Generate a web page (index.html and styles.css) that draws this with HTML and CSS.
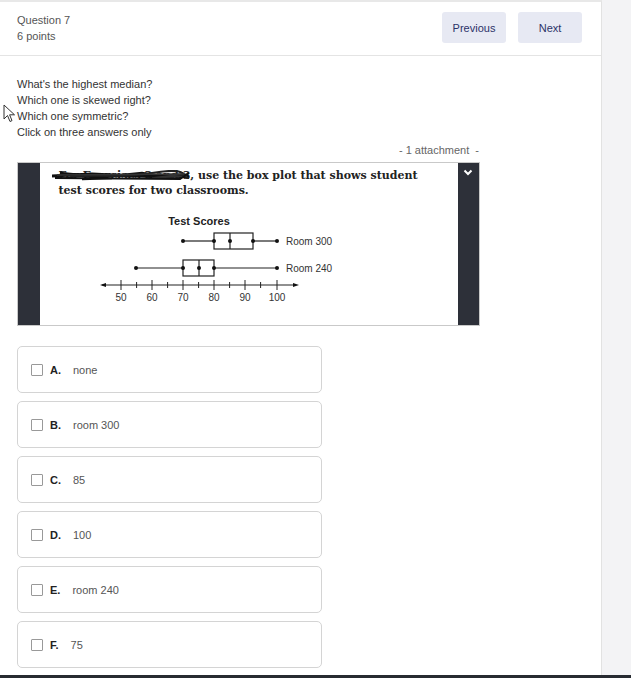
FILE: index.html
```html
<!DOCTYPE html>
<html lang="en">
<head>
  <meta charset="UTF-8">
  <title>Question 7</title>
  <link rel="stylesheet" href="styles.css">
</head>
<body>
  <div class="screen">
    <div class="page">
      <div class="main">
        <div class="q-header">
          <div class="q-meta">
            <div>Question 7</div>
            <div>6 points</div>
          </div>
          <div class="q-nav">
            <button class="nav-btn">Previous</button>
            <button class="nav-btn">Next</button>
          </div>
        </div>

        <div class="q-body">
          <div class="prompt">
            <p>What's the highest median?</p>
            <p>Which one is skewed right?</p>
            <p>Which one symmetric?</p>
            <p>Click on three answers only</p>
          </div>

          <div class="attach-count">- 1 attachment &nbsp;-</div>

          <div class="attachment">
            <div class="attach-bar"></div>
            <div class="attach-img">
              <div class="img-title">
                <span class="scribbled">For Exercises 2 and 3</span>, use the box plot that shows student<br>
                test scores for two classrooms.
                <svg class="scribble" width="140" height="12" viewBox="0 0 140 12">
                  <path d="M0 6 L40 4 L80 6 L136 5" stroke="#111" stroke-width="3" fill="none"/>
                  <path d="M8 3 L60 8 L30 9 L90 3 L120 8 L70 5 L137 7" stroke="#111" stroke-width="2.5" fill="none"/>
                  <path d="M14 8 C40 2 60 10 100 3 S130 9 137 8" stroke="#222" stroke-width="2" fill="none"/>
                  <path d="M5 5 L132 4 L100 8 L135 6" stroke="#333" stroke-width="1.5" fill="none"/>
                  <path d="M3 8 L128 9 L137 3" stroke="#111" stroke-width="2" fill="none"/>
                </svg>
              </div>
              <svg class="chart" width="418" height="126" viewBox="0 0 418 126">
                <text x="159" y="27" text-anchor="middle" class="chart-title">Test Scores</text>

                <g stroke="#222" stroke-width="1.2" fill="none">
                  <line x1="143" y1="43" x2="174" y2="43"/>
                  <line x1="213" y1="43" x2="237" y2="43"/>
                  <rect x="174" y="35" width="39" height="16"/>
                  <line x1="190" y1="35" x2="190" y2="51"/>

                  <line x1="96" y1="70" x2="143" y2="70"/>
                  <line x1="174" y1="70" x2="237" y2="70"/>
                  <rect x="143" y="62" width="31" height="16"/>
                  <line x1="159" y1="62" x2="159" y2="78"/>

                  <line x1="62" y1="87" x2="256" y2="87"/>
                </g>
                <g fill="#111">
                  <circle cx="143" cy="43" r="2"/>
                  <circle cx="174" cy="43" r="2"/>
                  <circle cx="190" cy="43" r="2"/>
                  <circle cx="213" cy="43" r="2"/>
                  <circle cx="237" cy="43" r="2"/>
                  <circle cx="96" cy="70" r="2"/>
                  <circle cx="143" cy="70" r="2"/>
                  <circle cx="159" cy="70" r="2"/>
                  <circle cx="174" cy="70" r="2"/>
                  <circle cx="237" cy="70" r="2"/>
                  <path d="M60 87 L66 85 L66 89 Z"/>
                  <path d="M259 87 L253 85 L253 89 Z"/>
                </g>
                <g stroke="#222" stroke-width="1">
                  <line x1="81" y1="82" x2="81" y2="92"/>
                  <line x1="96.6" y1="84" x2="96.6" y2="90"/>
                  <line x1="112" y1="82" x2="112" y2="92"/>
                  <line x1="127.6" y1="84" x2="127.6" y2="90"/>
                  <line x1="143" y1="82" x2="143" y2="92"/>
                  <line x1="158.6" y1="84" x2="158.6" y2="90"/>
                  <line x1="174" y1="82" x2="174" y2="92"/>
                  <line x1="189.6" y1="84" x2="189.6" y2="90"/>
                  <line x1="205" y1="82" x2="205" y2="92"/>
                  <line x1="220.6" y1="84" x2="220.6" y2="90"/>
                  <line x1="237" y1="82" x2="237" y2="92"/>
                </g>
                <g class="chart-label" text-anchor="middle">
                  <text x="81" y="103">50</text>
                  <text x="112" y="103">60</text>
                  <text x="143" y="103">70</text>
                  <text x="174" y="103">80</text>
                  <text x="205" y="103">90</text>
                  <text x="237" y="103">100</text>
                </g>
                <text x="246" y="47" class="chart-label">Room 300</text>
                <text x="246" y="74" class="chart-label">Room 240</text>
              </svg>
            </div>
            <div class="attach-bar">
              <svg class="chevron" width="10" height="7" viewBox="0 0 10 7">
                <path d="M1.5 1.5 L5 5 L8.5 1.5" stroke="#fff" stroke-width="2" fill="none"/>
              </svg>
            </div>
          </div>

          <div class="options">
            <label class="option"><span class="box"></span><b>A.</b><span class="opt-text">none</span></label>
            <label class="option"><span class="box"></span><b>B.</b><span class="opt-text">room 300</span></label>
            <label class="option"><span class="box"></span><b>C.</b><span class="opt-text">85</span></label>
            <label class="option"><span class="box"></span><b>D.</b><span class="opt-text">100</span></label>
            <label class="option"><span class="box"></span><b>E.</b><span class="opt-text">room 240</span></label>
            <label class="option"><span class="box"></span><b>F.</b><span class="opt-text">75</span></label>
          </div>
        </div>
      </div>
      <div class="side"></div>
    </div>
    <div class="bottom-bar"></div>

    <svg class="cursor" width="13" height="19" viewBox="0 0 13 19">
      <path d="M1 1 L1 15 L4.5 11.5 L7 17.5 L9 16.6 L6.6 10.8 L11.5 10.8 Z" fill="#fff" stroke="#333" stroke-width="1"/>
    </svg>
  </div>
</body>
</html>
```

FILE: styles.css
```css
* { box-sizing: border-box; }

body {
  margin: 0;
  font-family: "Liberation Sans", Arial, sans-serif;
  font-size: 11px;
  color: #333;
  background: #fff;
}

.screen {
  position: relative;
  width: 631px;
  height: 678px;
  display: flex;
  flex-direction: column;
  overflow: hidden;
}

.page {
  flex: 1;
  display: flex;
  overflow: hidden;
}

.main {
  width: 602px;
  border-top: 2px solid #e8e8e8;
  border-right: 1px solid #e2e2e2;
  background: #fff;
}

.side {
  flex: 1;
  background: #f3f3f5;
}

.bottom-bar {
  height: 3px;
  background: #272b31;
}

/* header */
.q-header {
  height: 54px;
  display: flex;
  justify-content: space-between;
  align-items: flex-start;
  padding: 10px 19px 0 17px;
  border-bottom: 1px solid #e4e4e4;
}

.q-meta {
  line-height: 16px;
  color: #555;
}

.q-nav {
  display: flex;
  gap: 12px;
}

.nav-btn {
  width: 64px;
  height: 31px;
  border: none;
  border-radius: 3px;
  background: #e7e9f3;
  color: #2c3268;
  font-family: "Liberation Sans", Arial, sans-serif;
  font-size: 11px;
  padding: 0;
}

/* body */
.q-body {
  padding: 20px 0 0 17px;
}

.prompt p {
  margin: 0;
  line-height: 16px;
  color: #333;
}

.attach-count {
  width: 463px;
  margin-top: 2px;
  text-align: right;
  line-height: 16px;
  color: #666;
  padding-right: 1px;
}

.attachment {
  width: 463px;
  height: 164px;
  margin-top: 4px;
  display: flex;
  border: 1px solid #c9c9c9;
}

.attach-bar {
  width: 22px;
  background: #2d3039;
  display: flex;
  justify-content: center;
}

.chevron {
  margin-top: 6px;
}

.attach-img {
  flex: 1;
  background: #fff;
}

.img-title {
  position: relative;
  height: 35px;
  padding: 5px 0 0 19px;
  font-family: "DejaVu Serif", "Liberation Serif", serif;
  font-weight: bold;
  font-size: 11px;
  line-height: 15px;
  color: #222;
  white-space: nowrap;
}

.scribble {
  position: absolute;
  left: 12px;
  top: 7px;
}

.chart {
  display: block;
}

.chart-title {
  font-family: "Liberation Sans", Arial, sans-serif;
  font-weight: bold;
  font-size: 11px;
  fill: #222;
}

.chart-label {
  font-family: "Liberation Sans", Arial, sans-serif;
  font-size: 10px;
  fill: #333;
}

/* options */
.options {
  margin-top: 20px;
  display: flex;
  flex-direction: column;
  gap: 8px;
  width: 305px;
}

.option {
  height: 47px;
  border: 1px solid #d4d4d4;
  border-radius: 5px;
  display: flex;
  align-items: center;
  padding-left: 13px;
}

.option .box {
  width: 12px;
  height: 12px;
  border: 1.5px solid #999;
  border-radius: 1px;
  margin-right: 7px;
}

.option b {
  color: #222;
}

.opt-text {
  margin-left: 12px;
  color: #555;
}

.cursor {
  position: absolute;
  left: 3px;
  top: 104px;
}
```
